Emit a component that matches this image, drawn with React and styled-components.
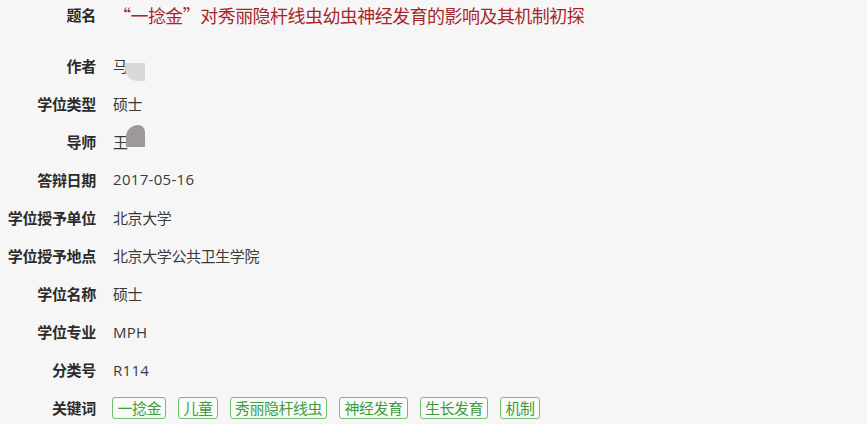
import React from "react";
import styled, { createGlobalStyle } from "styled-components";

const Global = createGlobalStyle`
  html, body { margin: 0; padding: 0; background: #f6f6f6; }
  body { font-family: "Open Sans", "Noto Sans CJK SC", sans-serif; }
`;

const Page = styled.div`
  width: 867px;
  height: 424px;
  overflow: hidden;
  background: #f6f6f6;
`;

const List = styled.div`
  display: flex;
  flex-direction: column;
`;

const Row = styled.div`
  display: grid;
  grid-template-columns: 96px 1fr;
  column-gap: 17px;
  align-items: center;
  height: ${(p) => (p.$title ? "29px" : "38.1px")};
  margin-bottom: ${(p) => (p.$title ? "17px" : "0")};
`;

const Label = styled.div`
  text-align: right;
  font-family: "Noto Sans CJK SC", sans-serif;
  font-size: 15px;
  font-weight: 700;
  color: #2b2b2b;
  white-space: nowrap;
  letter-spacing: -0.3px;
`;

const Value = styled.div`
  position: relative;
  font-family: "Open Sans", "Noto Sans CJK SC", sans-serif;
  font-size: 15px;
  color: #3a3a3a;
  white-space: nowrap;
  letter-spacing: ${(p) => (p.$latin ? "0.3px" : "-0.4px")};
`;

const Title = styled.div`
  font-family: "Noto Sans CJK SC", sans-serif;
  font-size: 18px;
  color: #a8262b;
  white-space: nowrap;
  letter-spacing: -0.55px;
`;

const Redaction = styled.span`
  position: absolute;
  left: ${(p) => p.$left}px;
  top: ${(p) => p.$top}px;
  width: ${(p) => p.$w}px;
  height: ${(p) => p.$h}px;
  background: ${(p) => p.$color};
  border-radius: ${(p) => p.$radius};
`;

const Tags = styled.div`
  display: flex;
  gap: 12px;
  align-items: center;
  margin-left: -1px;
`;

const Tag = styled.span`
  display: inline-flex;
  align-items: center;
  height: 22px;
  box-sizing: border-box;
  padding: 0 4px 0 4.5px;
  border: 1px solid #6fbf6f;
  border-radius: 3px;
  font-family: "Noto Sans CJK SC", sans-serif;
  font-size: 15px;
  color: #3f9a3f;
  letter-spacing: -0.5px;
  background: #f8fbf8;
`;

const rows = [
  ["学位类型", "硕士"],
  ["导师", "王"],
  ["答辩日期", "2017-05-16", true],
  ["学位授予单位", "北京大学"],
  ["学位授予地点", "北京大学公共卫生学院"],
  ["学位名称", "硕士"],
  ["学位专业", "MPH", true],
  ["分类号", "R114", true],
];

const keywords = ["一捻金", "儿童", "秀丽隐杆线虫", "神经发育", "生长发育", "机制"];

export default function App() {
  return (
    <Page>
      <Global />
      <List>
        <Row $title>
          <Label>题名</Label>
          <Title>“一捻金”对秀丽隐杆线虫幼虫神经发育的影响及其机制初探</Title>
        </Row>
        <Row>
          <Label>作者</Label>
          <Value>
            马
            <Redaction $left={12} $top={8} $w={20} $h={18} $color="#d8d8d8" $radius="0 0 0 13px" />
          </Value>
        </Row>
        {rows.map(([k, v, latin]) => (
          <Row key={k}>
            <Label>{k}</Label>
            <Value $latin={latin}>
              {v}
              {k === "导师" && (
                <Redaction $left={13} $top={-6} $w={19} $h={22} $color="#9d999b" $radius="16px 9px 0 0" />
              )}
            </Value>
          </Row>
        ))}
        <Row>
          <Label>关键词</Label>
          <Tags>
            {keywords.map((k) => (
              <Tag key={k}>{k}</Tag>
            ))}
          </Tags>
        </Row>
      </List>
    </Page>
  );
}
